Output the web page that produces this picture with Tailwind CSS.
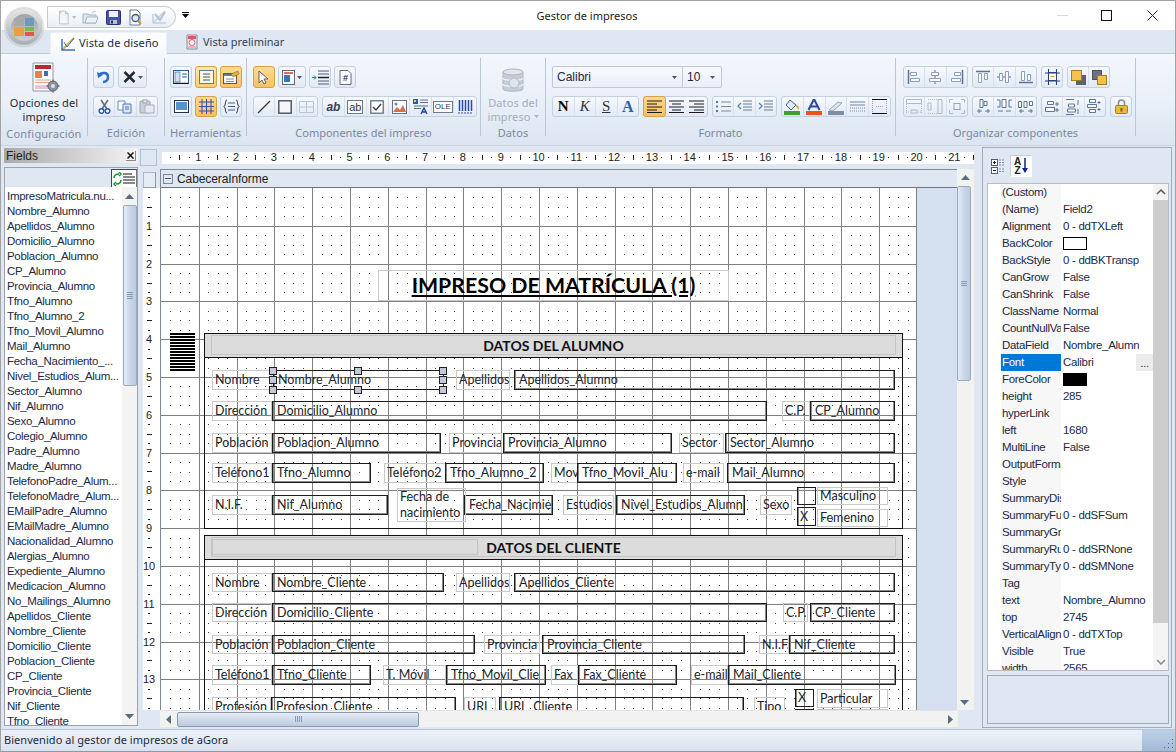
<!DOCTYPE html>
<html lang="es">
<head>
<meta charset="UTF-8">
<title>Gestor de impresos</title>
<script src="https://cdn.jsdelivr.net/npm/@tailwindcss/browser@4"></script>
</head>
<body class="bg-[#dfe7f2] overflow-hidden">
<div class="relative w-[1176px] h-[752px] flex flex-col border border-[#a3a3a3] border-b-[#8f98a5] bg-[#dfe7f2] overflow-hidden font-['Noto_Sans',sans-serif] text-[11px] text-[#1e2430]">

  <!-- barra de titulo -->
  <div class="relative h-[29px] shrink-0 bg-white flex items-center justify-center">
    <span class="ml-[-2px] mt-[2px] text-[11px] text-[#222]">Gestor de impresos</span>
    <!-- quick access -->
    <div class="absolute left-[46px] top-[5px] w-[129px] h-[22px] rounded-r-full border border-[#c9c9c9] bg-gradient-to-b from-white to-[#e9eef5] flex items-center gap-[6px] pl-[9px]">
      <div class="flex items-center w-[19px]">
        <svg width="16" height="17" viewBox="0 0 16 17"><path d="M3 1h7l3 3v12H3z" fill="#f2f6fa" stroke="#aebccd"/><path d="M10 1v3h3" fill="#dfe7f0" stroke="#aebccd"/><path d="M2 3h3M3.500 1.500v3" stroke="#d9c68a"/></svg>
        <svg width="5" height="3" viewBox="0 0 5 3" class="ml-[1px]"><path d="M0 0h5L2.500 3z" fill="#a9b4c2"/></svg>
      </div>
      <svg width="17" height="16" viewBox="0 0 17 16"><path d="M1 5h5l1 1h7v8H1z" fill="#dce5ef" stroke="#a7b5c6"/><path d="M3 14l2-6h11l-2 6z" fill="#eef3f8" stroke="#a7b5c6"/><path d="M10 4c1-2 3-2 4-1" fill="none" stroke="#b7c5d6"/></svg>
      <svg width="15" height="15" viewBox="0 0 15 15" class="ml-[1px]"><rect x=".5" y=".5" width="14" height="14" rx="1" fill="#4453a8" stroke="#2a3272"/><rect x="3" y="1" width="9" height="6" fill="#eef0fa"/><rect x="4" y="10" width="7" height="4" fill="#b9bfdc"/><rect x="5" y="10.500" width="2" height="3" fill="#2a3272"/></svg>
      <svg width="17" height="17" viewBox="0 0 17 17"><path d="M3 1h7l3 3v12H3z" fill="#fff" stroke="#6e7f95"/><circle cx="8.500" cy="9" r="3.500" fill="#dbe9f7" stroke="#4a5a70" stroke-width="1.300"/><path d="M11 12l3 3" stroke="#c99a2e" stroke-width="2"/></svg>
      <svg width="17" height="16" viewBox="0 0 17 16" class="ml-[1px]"><path d="M2 14L14 2M2 14h13M2 14V5" stroke="#c3cfdd" stroke-width="1.500" fill="none"/><path d="M4 5l5 6 5-8" fill="none" stroke="#b5c3d3" stroke-width="2"/></svg>
    </div>
    <div class="absolute left-[181px] top-[11px] flex flex-col items-center gap-[1px]">
      <div class="w-[7px] h-[1px] bg-black"></div>
      <svg width="7" height="4" viewBox="0 0 7 4"><path d="M0 0h7L3.500 4z" fill="#000"/></svg>
    </div>
    <!-- botones ventana -->
    <div class="absolute left-[1056px] top-[14px] w-[11px] h-[1px] bg-[#d8d8d8]"></div>
    <div class="absolute left-[1100px] top-[9px] w-[11px] h-[11px] border border-[#111]"></div>
    <svg class="absolute left-[1146px] top-[9px]" width="11" height="11" viewBox="0 0 11 11"><path d="M.5.5l10 10M10.500.5l-10 10" stroke="#222"/></svg>
  </div>

  <!-- orbe -->
  <div class="absolute left-[4px] top-[7px] w-[38px] h-[38px] rounded-full bg-gradient-to-b from-[#e6e6e6] to-[#a9afb6] border border-[#dcdcdc] shadow-[0_0_2px_#7f8a96] flex items-center justify-center z-10">
    <div class="w-[27px] h-[27px] rounded-full bg-gradient-to-b from-[#9fa5ac] to-[#c9ced4] flex items-center justify-center">
      <div class="grid grid-cols-2 gap-[1px] w-[20px] h-[18px]">
        <div class="bg-[#a9a9a9]"></div>
        <div class="bg-[#6f9ab6]"></div>
        <div class="bg-[#ef9f3a]"></div>
        <div class="flex flex-col gap-[1px]"><div class="flex-1 bg-[#80b455]"></div><div class="flex-1 bg-[#e2554a]"></div></div>
      </div>
    </div>
  </div>

  <!-- pestañas -->
  <div class="h-[23px] shrink-0 flex pl-[49px] items-end">
    <div class="w-[117px] h-[22px] bg-gradient-to-b from-white to-[#f5f8fc] rounded-t-[2px] border-x border-t border-[#eaf0f7] flex items-center pl-[10px] gap-[3px] text-[#1d2c42] relative z-[1] mb-[-1px]">
      <svg width="15" height="15" viewBox="0 0 15 15"><path d="M1 14L13 2" stroke="#e0b04a" stroke-width="2"/><path d="M1 3v11h13" fill="none" stroke="#3a73b8" stroke-width="1.500"/><path d="M3 6l3 5 7-9" fill="none" stroke="#3a73b8"/></svg>
      <span class="tracking-[.1px] whitespace-nowrap">Vista de diseño</span>
    </div>
    <div class="ml-[18px] h-[22px] flex items-center gap-[3px] text-[#2f3f57]">
      <svg width="15" height="16" viewBox="0 0 15 16"><path d="M2 1h10v14H2z" fill="#f7e5ea" stroke="#8b8f98"/><rect x="3" y="2" width="8" height="3" fill="#d8586a"/><circle cx="7" cy="8.500" r="3" fill="#fff" stroke="#c9606f"/><rect x="3" y="12" width="8" height="2" fill="#e9b6c0"/></svg>
      <span class="whitespace-nowrap">Vista preliminar</span>
    </div>
  </div>

  <!-- ribbon -->
  <div class="h-[92px] shrink-0 border-t border-[#bccadb] bg-gradient-to-b from-[#f3f7fc] via-[#eaf0f8] to-[#dbe5f1] flex pt-[4px] text-[#1e2a3c]">

    <!-- Configuracion -->
    <div class="w-[87px] h-[78px] shrink-0 border-r border-[#bac6d6] flex flex-col items-center">
      <svg class="mt-[4px] ml-[3px] shrink-0" width="28" height="32" viewBox="0 0 28 32">
        <path d="M1 1h20v28H1z" fill="#fff" stroke="#8b95a3"/>
        <rect x="3" y="3" width="16" height="4" fill="#b8292f"/>
        <rect x="3" y="9" width="7" height="7" fill="#e9804a"/>
        <rect x="12" y="9" width="4" height="5" fill="#3a6fb0"/>
        <path d="M3 18h16M3 20.500h16" stroke="#f0a080"/>
        <rect x="3" y="23" width="16" height="4" fill="#f0c0d8"/>
        <circle cx="21" cy="24" r="5" fill="#8c939c" stroke="#5e656e"/><circle cx="21" cy="24" r="2" fill="#dfe3e8"/>
        <path d="M21 17.500v2M21 28.500v2M14.500 24h2M25.500 24h2" stroke="#6a717a" stroke-width="1.500"/>
      </svg>
      <div class="mt-[2px] leading-[13.500px] text-center tracking-[.1px] whitespace-nowrap">Opciones del<br>impreso</div>
      <div class="mt-[2px] h-[11px] leading-[18px] text-[#7b8aa0] tracking-[.2px] whitespace-nowrap">Configuración</div>
    </div>

    <!-- Edicion -->
    <div class="w-[77px] h-[78px] shrink-0 border-r border-[#bac6d6] pl-[5px] pt-[8px] flex flex-col">
      <div class="flex gap-[4px] h-[22px]">
        <div class="w-[21px] flex items-center justify-center border border-[#c3d0e0] rounded-[3px] bg-gradient-to-b from-[#f6f9fd] to-[#e2eaf5]">
          <svg width="15" height="14" viewBox="0 0 15 14"><path d="M3 5c3-3 9-3 9 2 0 3-2 5-5 5" fill="none" stroke="#2f6cc4" stroke-width="2.500"/><path d="M1 2l1 6 5-3z" fill="#2f6cc4"/></svg>
        </div>
        <div class="w-[29px] flex items-center justify-center gap-[2px] border border-[#c3d0e0] rounded-[3px] bg-gradient-to-b from-[#f6f9fd] to-[#e2eaf5]">
          <svg width="13" height="12" viewBox="0 0 13 12"><path d="M1.500 1l10 10M11.500 1l-10 10" stroke="#262a30" stroke-width="2.500"/></svg>
          <svg width="5" height="3" viewBox="0 0 5 3"><path d="M0 0h5L2.500 3z" fill="#4a5566"/></svg>
        </div>
      </div>
      <div class="flex mt-[8px] h-[21px] w-[65px] border border-[#c3d0e0] rounded-[3px] bg-gradient-to-b from-[#f6f9fd] to-[#e2eaf5] divide-x divide-[#d7e0ec]">
        <div class="flex-1 flex items-center justify-center"><svg width="13" height="15" viewBox="0 0 13 15"><path d="M3 1l6 9M10 1L4 10" stroke="#5a6a80" stroke-width="1.500"/><circle cx="3.500" cy="12" r="2.300" fill="#fff" stroke="#2c56a8" stroke-width="1.500"/><circle cx="9.500" cy="12" r="2.300" fill="#fff" stroke="#2c56a8" stroke-width="1.500"/></svg></div>
        <div class="flex-1 flex items-center justify-center"><svg width="16" height="14" viewBox="0 0 16 14"><path d="M1 1h7v9H1z" fill="#fff" stroke="#6d8ab3"/><path d="M6 4h8v9H6z" fill="#dbe8f8" stroke="#4d79b5"/><path d="M8 7h4M8 9h4" stroke="#4d79b5"/></svg></div>
        <div class="flex-1 flex items-center justify-center"><svg width="16" height="15" viewBox="0 0 16 15"><rect x="1" y="2" width="10" height="12" rx="1" fill="#c9d0d9" stroke="#9aa5b2"/><rect x="4" y="1" width="4" height="3" fill="#e5e9ee" stroke="#9aa5b2"/><path d="M6 6h9v8H6z" fill="#e6ebf1" stroke="#a5afbc"/></svg></div>
      </div>
      <div class="mt-[8px] h-[11px] leading-[16px] text-center text-[#7b8aa0] tracking-[.2px] mr-[5px]">Edición</div>
    </div>

    <!-- Herramientas -->
    <div class="w-[82px] h-[78px] shrink-0 border-r border-[#bac6d6] pl-[5px] pt-[8px] flex flex-col">
      <div class="flex gap-[3px] h-[22px]">
        <div class="w-[22px] flex items-center justify-center border border-[#c3d0e0] rounded-[3px] bg-gradient-to-b from-[#f6f9fd] to-[#e2eaf5]"><svg width="16" height="14" viewBox="0 0 16 14"><rect x=".5" y=".5" width="15" height="13" fill="#fff" stroke="#2e5c9a"/><rect x="2" y="2" width="5" height="10" fill="#cfe0f3" stroke="#2e5c9a" stroke-width=".6"/><path d="M9 4h5M9 7h5" stroke="#2e5c9a"/><path d="M.5 13.500h15" stroke="#121a2a" stroke-width="1.500"/></svg></div>
        <div class="w-[22px] flex items-center justify-center border border-[#d3a348] rounded-[3px] bg-gradient-to-b from-[#fde7ae] to-[#fbcf74]"><svg width="15" height="14" viewBox="0 0 15 14"><rect x=".5" y=".5" width="14" height="13" fill="#fff7dd" stroke="#5b7aa6"/><path d="M4 4h7M4 7h7M4 10h7" stroke="#2e5c9a"/></svg></div>
        <div class="w-[22px] flex items-center justify-center border border-[#d3a348] rounded-[3px] bg-gradient-to-b from-[#fcdc94] to-[#f9c362]"><svg width="17" height="14" viewBox="0 0 17 14"><rect x=".5" y="3.500" width="13" height="10" fill="#fff" stroke="#4b5666"/><rect x="1" y="4" width="12" height="2" fill="#64789a"/><path d="M3 9h8M3 11.500h8" stroke="#7d8896"/><path d="M8 4l7-3 1 3-6 3z" fill="#d9b43e" stroke="#8a7326" stroke-width=".6"/></svg></div>
      </div>
      <div class="flex gap-[3px] mt-[8px] h-[21px]">
        <div class="w-[22px] flex items-center justify-center border border-[#c3d0e0] rounded-[3px] bg-gradient-to-b from-[#f6f9fd] to-[#e2eaf5]"><svg width="15" height="13" viewBox="0 0 15 13"><rect x=".5" y=".5" width="14" height="12" fill="#fff" stroke="#23324a"/><rect x="2" y="2" width="11" height="8" fill="#5d8fd0"/></svg></div>
        <div class="w-[22px] flex items-center justify-center border border-[#d3a348] rounded-[3px] bg-gradient-to-b from-[#fcd98c] to-[#f9c05c]"><svg width="15" height="15" viewBox="0 0 15 15"><path d="M3 0v15M7.500 0v15M12 0v15M0 3h15M0 7.500h15M0 12h15" stroke="#3a4fa8" stroke-width="1"/></svg></div>
        <div class="w-[22px] flex items-center justify-center border border-[#c3d0e0] rounded-[3px] bg-gradient-to-b from-[#f6f9fd] to-[#e2eaf5]"><svg width="17" height="15" viewBox="0 0 17 15"><path d="M4 1C2 1 3 6 1 7.500 3 9 2 14 4 14M13 1c2 0 1 5 3 6.500C14 9 15 14 13 14" fill="none" stroke="#1a2230"/><path d="M5 4h7M5 7.500h7M5 11h7" stroke="#3e5f8e"/></svg></div>
      </div>
      <div class="mt-[8px] ml-[-5px] h-[11px] leading-[16px] text-center text-[#7b8aa0]">Herramientas</div>
    </div>

    <!-- Componentes -->
    <div class="w-[234px] h-[78px] shrink-0 border-r border-[#bac6d6] pl-[6px] pt-[8px] flex flex-col">
      <div class="flex gap-[3px] h-[22px]">
        <div class="w-[22px] flex items-center justify-center border border-[#d3a348] rounded-[3px] bg-gradient-to-b from-[#fcdc94] to-[#f9c362]"><svg width="12" height="15" viewBox="0 0 12 15"><path d="M1 1v12l3-3 2 4 2-1-2-4h4z" fill="#fff" stroke="#5a6573"/></svg></div>
        <div class="w-[28px] flex items-center justify-center gap-[2px] border border-[#c3d0e0] rounded-[3px] bg-gradient-to-b from-[#f6f9fd] to-[#e2eaf5]"><svg width="13" height="15" viewBox="0 0 13 15"><rect x=".5" y=".5" width="12" height="14" fill="#fff" stroke="#5d6b7e"/><rect x="2" y="2" width="9" height="2" fill="#d8705a"/><rect x="2" y="5" width="6" height="7" fill="#3a75b8"/></svg><svg width="5" height="3" viewBox="0 0 5 3"><path d="M0 0h5L2.500 3z" fill="#4a5566"/></svg></div>
        <div class="w-[22px] flex items-center justify-center border border-[#c3d0e0] rounded-[3px] bg-gradient-to-b from-[#f6f9fd] to-[#e2eaf5]"><svg width="17" height="15" viewBox="0 0 17 15"><path d="M6 1h11M6 4h11M6 11h11M6 14h11" stroke="#4a5e7c"/><path d="M6 7.500h11" stroke="#1a2230" stroke-width="1.500"/><path d="M0 7.500h4M2 5.500l2 2-2 2" fill="none" stroke="#2e6fc0"/></svg></div>
        <div class="w-[22px] flex items-center justify-center border border-[#c3d0e0] rounded-[3px] bg-gradient-to-b from-[#f6f9fd] to-[#e2eaf5]"><svg width="13" height="15" viewBox="0 0 13 15"><path d="M1 .5h8l3 3v11H1z" fill="#fff" stroke="#5d6b7e"/><text x="6.500" y="11" text-anchor="middle" font-size="9" font-weight="700" font-family="Liberation Sans" fill="#1a2a6a">#</text></svg></div>
      </div>
      <div class="flex gap-[4px] mt-[8px] h-[21px]">
        <div class="flex w-[65px] border border-[#c3d0e0] rounded-[3px] bg-gradient-to-b from-[#f6f9fd] to-[#e2eaf5] divide-x divide-[#d7e0ec]">
          <div class="flex-1 flex items-center justify-center"><svg width="14" height="14" viewBox="0 0 14 14"><path d="M1 13L13 1" stroke="#30353d" stroke-width="1.200"/></svg></div>
          <div class="flex-1 flex items-center justify-center"><svg width="14" height="14" viewBox="0 0 14 14"><rect x=".8" y=".8" width="12.400" height="12.400" fill="#f4f6f9" stroke="#4a4f57" stroke-width="1.400"/></svg></div>
          <div class="flex-1 flex items-center justify-center"><svg width="15" height="12" viewBox="0 0 15 12"><path d="M.5.5h14v11H.5zM.5 6h14M7.500.5v11" fill="none" stroke="#b9c4d2"/></svg></div>
        </div>
        <div class="flex w-[155px] border border-[#c3d0e0] rounded-[3px] bg-gradient-to-b from-[#f6f9fd] to-[#e2eaf5] divide-x divide-[#d7e0ec]">
          <div class="w-[22px] flex items-center justify-center font-['Liberation_Sans',sans-serif] font-bold italic text-[#3a4048] text-[12px]">ab</div>
          <div class="w-[22px] flex items-center justify-center"><span class="border border-[#6e7a8a] bg-white px-[1px] font-['Liberation_Sans',sans-serif] text-[#30363e] text-[11px] leading-[12px]">ab</span></div>
          <div class="w-[22px] flex items-center justify-center"><svg width="14" height="14" viewBox="0 0 14 14"><rect x=".8" y=".8" width="12.400" height="12.400" fill="#fff" stroke="#5b6472" stroke-width="1.200"/><path d="M3 7l3 3 5-6" fill="none" stroke="#3b4452" stroke-width="1.500"/></svg></div>
          <div class="w-[22px] flex items-center justify-center"><svg width="15" height="14" viewBox="0 0 15 14"><rect x=".5" y=".5" width="14" height="13" fill="#fff" stroke="#687486"/><path d="M1 12l4-5 3 3 3-5 3 7z" fill="#d3704a"/><circle cx="4" cy="4" r="1.500" fill="#4e8ccc"/></svg></div>
          <div class="w-[22px] flex items-center justify-center"><svg width="16" height="16" viewBox="0 0 16 16"><rect x="0" y="0" width="5" height="5" fill="#2c56b8"/><rect x="1" y="1" width="2" height="2" fill="#f0d040"/><path d="M7 1h8M7 3.500h8M1 7h14M1 9.500h7" stroke="#5d6f8a"/><path d="M8 15l3-6 3 6M9 13h4" fill="none" stroke="#1f3e9a" stroke-width="1.300"/></svg></div>
          <div class="w-[22px] flex items-center justify-center"><span class="border border-[#6e7a8a] bg-white px-[1px] font-['Liberation_Sans',sans-serif] text-[#2c3a52] text-[8px] leading-[10px]">OLE</span></div>
          <div class="w-[22px] flex items-center justify-center"><svg width="15" height="14" viewBox="0 0 15 14"><path d="M1.500 0v11M4.500 0v11M7.500 0v11M10.500 0v11M13.500 0v11" stroke="#2c4aa8" stroke-width="1.500"/><path d="M0 13h15" stroke="#2c4aa8" stroke-dasharray="2 1"/></svg></div>
        </div>
      </div>
      <div class="mt-[8px] ml-[-6px] h-[11px] leading-[16px] text-center text-[#7b8aa0] whitespace-nowrap">Componentes del impreso</div>
    </div>

    <!-- Datos -->
    <div class="w-[65px] h-[78px] shrink-0 border-r border-[#bac6d6] flex flex-col items-center">
      <svg class="mt-[10px] shrink-0" width="24" height="26" viewBox="0 0 24 26"><path d="M2 4v17c0 3 20 3 20 0V4" fill="#c3ccd7" stroke="#aeb8c4"/><ellipse cx="12" cy="4" rx="10" ry="3" fill="#dfe5ec" stroke="#aeb8c4"/><path d="M2 10c0 3 20 3 20 0M2 16c0 3 20 3 20 0" fill="none" stroke="#eef2f6" stroke-width="1.500"/><circle cx="13" cy="15" r="5" fill="#dfe5ec" stroke="#b0bac6"/></svg>
      <div class="mt-[2px] leading-[13.500px] text-center text-[#a3adb9] tracking-[.1px] whitespace-nowrap">Datos del<br><span class="inline-flex items-center gap-[3px]">impreso<svg width="5" height="3" viewBox="0 0 5 3"><path d="M0 0h5L2.500 3z" fill="#a9b4c2"/></svg></span></div>
      <div class="mt-[2px] h-[11px] leading-[16px] text-[#7b8aa0] tracking-[.1px]">Datos</div>
    </div>

    <!-- Formato -->
    <div class="w-[350px] h-[78px] shrink-0 border-r border-[#bac6d6] pl-[6px] pt-[8px] flex flex-col">
      <div class="flex h-[22px] w-[170px] border border-[#bccadb] rounded-[2px] bg-gradient-to-b from-[#f8fafd] to-[#e9eff7] font-['Liberation_Sans',sans-serif]">
        <div class="w-[130px] border-r border-[#bccadb] flex items-center justify-between px-[4px] pr-[5px] text-[12px]">Calibri<svg width="5" height="3" viewBox="0 0 5 3"><path d="M0 0h5L2.500 3z" fill="#4a5566"/></svg></div>
        <div class="flex-1 flex items-center justify-between pl-[4px] pr-[6px] text-[12px]">10<svg width="5" height="3" viewBox="0 0 5 3"><path d="M0 0h5L2.500 3z" fill="#4a5566"/></svg></div>
      </div>
      <div class="flex gap-[4px] mt-[8px] h-[21px]">
        <div class="flex w-[87px] border border-[#c3d0e0] rounded-[3px] bg-gradient-to-b from-[#f6f9fd] to-[#e2eaf5] divide-x divide-[#d7e0ec] font-['Liberation_Serif',serif] text-[15px]">
          <div class="flex-1 flex items-center justify-center font-bold text-black">N</div>
          <div class="flex-1 flex items-center justify-center italic text-[#333]">K</div>
          <div class="flex-1 flex items-center justify-center underline text-[#333]">S</div>
          <div class="flex-1 flex items-center justify-center font-bold text-[#2d5fa6] text-[16px]">A</div>
        </div>
        <div class="flex w-[65px] border border-[#c3d0e0] rounded-[3px] bg-gradient-to-b from-[#f6f9fd] to-[#e2eaf5]">
          <div class="flex-1 flex items-center justify-center border border-[#d3a348] rounded-[3px] bg-gradient-to-b from-[#fcd98c] to-[#f9c05c] m-[-1px]"><svg width="15" height="13" viewBox="0 0 15 13"><path d="M0 1h15M0 4h10M0 7h15M0 10h10M0 12.500h15" stroke="#1a1a1a"/></svg></div>
          <div class="flex-1 flex items-center justify-center ml-[1px]"><svg width="15" height="13" viewBox="0 0 15 13"><path d="M0 1h15M3 4h9M0 7h15M3 10h9M0 12.500h15" stroke="#1a1a1a"/></svg></div>
          <div class="flex-1 flex items-center justify-center"><svg width="15" height="13" viewBox="0 0 15 13"><path d="M0 1h15M5 4h10M0 7h15M5 10h10M0 12.500h15" stroke="#1a1a1a"/></svg></div>
        </div>
        <div class="flex w-[65px] border border-[#c3d0e0] rounded-[3px] bg-gradient-to-b from-[#f6f9fd] to-[#e2eaf5] divide-x divide-[#d7e0ec]">
          <div class="flex-1 flex items-center justify-center"><svg width="15" height="13" viewBox="0 0 15 13"><path d="M5 2h10M5 6.500h10M5 11h10" stroke="#7a8ba3"/><rect x="0" y="1" width="2" height="2" fill="#5d7698"/><rect x="0" y="5.500" width="2" height="2" fill="#5d7698"/><rect x="0" y="10" width="2" height="2" fill="#5d7698"/></svg></div>
          <div class="flex-1 flex items-center justify-center"><svg width="15" height="13" viewBox="0 0 15 13"><path d="M6 1h9M6 4h9M6 7h9M6 10h9" stroke="#6b7d96"/><path d="M4 3L1 6l3 3" fill="none" stroke="#5a87c4" stroke-width="1.300"/></svg></div>
          <div class="flex-1 flex items-center justify-center"><svg width="15" height="13" viewBox="0 0 15 13"><path d="M6 1h9M6 4h9M6 7h9M6 10h9" stroke="#6b7d96"/><path d="M1 3l3 3-3 3" fill="none" stroke="#5a87c4" stroke-width="1.300"/></svg></div>
        </div>
        <div class="flex w-[110px] border border-[#c3d0e0] rounded-[3px] bg-gradient-to-b from-[#f6f9fd] to-[#e2eaf5] divide-x divide-[#d7e0ec]">
          <div class="flex-1 flex items-center justify-center"><svg width="16" height="16" viewBox="0 0 16 16"><path d="M6 1l6 5-5 5-5-5z" fill="#dfe8f3" stroke="#4c6080"/><path d="M12 6c2 2 3 3 2 4" fill="none" stroke="#d59c2a" stroke-width="1.500"/><rect x="0" y="12" width="16" height="4" fill="#3f9e3a"/></svg></div>
          <div class="flex-1 flex items-center justify-center"><svg width="16" height="16" viewBox="0 0 16 16"><path d="M2.500 11L8 0l5.500 11M4.500 7.500h7" fill="none" stroke="#2c4a96" stroke-width="2"/><rect x="0" y="12" width="16" height="4" fill="#ee4f22"/></svg></div>
          <div class="flex-1 flex items-center justify-center"><svg width="16" height="16" viewBox="0 0 16 16"><path d="M1 11l9-8 4 1-9 8z" fill="#dde4ee" stroke="#9aa7b8"/><rect x="0" y="12" width="16" height="4" fill="#7f8ea6"/></svg></div>
          <div class="flex-1 flex items-center justify-center"><svg width="15" height="12" viewBox="0 0 15 12"><path d="M0 1h15M0 4h15" stroke="#7588a3"/><path d="M0 7h15M0 10h15" stroke="#7588a3" stroke-dasharray="1 1"/></svg></div>
          <div class="flex-1 flex items-center justify-center"><svg width="15" height="15" viewBox="0 0 15 15"><path d="M0 .5h15M0 14.500h15" stroke="#111"/><path d="M.5 2v11M14.500 2v11M4 7.500h8" stroke="#9aa7b8" stroke-dasharray="1 1"/></svg></div>
        </div>
      </div>
      <div class="mt-[8px] ml-[-6px] h-[11px] leading-[16px] text-center text-[#7b8aa0]">Formato</div>
    </div>

    <!-- Organizar -->
    <div class="w-[240px] h-[78px] shrink-0 border-r border-[#bac6d6] pl-[7px] pt-[8px] flex flex-col">
      <div class="flex gap-[4px] h-[22px]">
        <div class="flex w-[65px] border border-[#c3d0e0] rounded-[3px] bg-gradient-to-b from-[#f6f9fd] to-[#e2eaf5] divide-x divide-[#d7e0ec]">
          <div class="flex-1 flex items-center justify-center"><svg width="14" height="14" viewBox="0 0 14 14"><path d="M1.500 0v14" stroke="#5c7396" stroke-width="1.500"/><path d="M3.500 2.500h6v3h-6zM3.500 8.500h9v3h-9z" fill="#fff" stroke="#8ea0b8"/></svg></div>
          <div class="flex-1 flex items-center justify-center"><svg width="14" height="14" viewBox="0 0 14 14"><path d="M7 0v14" stroke="#5c7396"/><path d="M3.500 2.500h7v3h-7zM1.500 8.500h11v3h-11z" fill="#fff" stroke="#8ea0b8"/></svg></div>
          <div class="flex-1 flex items-center justify-center"><svg width="14" height="14" viewBox="0 0 14 14"><path d="M12.500 0v14" stroke="#5c7396" stroke-width="1.500"/><path d="M4.500 2.500h6v3h-6zM1.500 8.500h9v3h-9z" fill="#fff" stroke="#8ea0b8"/></svg></div>
        </div>
        <div class="flex w-[65px] border border-[#c3d0e0] rounded-[3px] bg-gradient-to-b from-[#f6f9fd] to-[#e2eaf5] divide-x divide-[#d7e0ec]">
          <div class="flex-1 flex items-center justify-center"><svg width="14" height="14" viewBox="0 0 14 14"><path d="M0 1.500h14" stroke="#5c7396" stroke-width="1.500"/><path d="M2.500 3.500h3v9h-3zM8.500 3.500h3v6h-3z" fill="#fff" stroke="#8ea0b8"/></svg></div>
          <div class="flex-1 flex items-center justify-center"><svg width="14" height="14" viewBox="0 0 14 14"><path d="M0 7h14" stroke="#5c7396"/><path d="M2.500 3.500h3v7h-3zM8.500 1.500h3v11h-3z" fill="#fff" stroke="#8ea0b8"/></svg></div>
          <div class="flex-1 flex items-center justify-center"><svg width="14" height="14" viewBox="0 0 14 14"><path d="M0 12.500h14" stroke="#5c7396" stroke-width="1.500"/><path d="M2.500 1.500h3v9h-3zM8.500 4.500h3v6h-3z" fill="#fff" stroke="#8ea0b8"/></svg></div>
        </div>
        <div class="w-[22px] flex items-center justify-center border border-[#c3d0e0] rounded-[3px] bg-gradient-to-b from-[#f6f9fd] to-[#e2eaf5]"><svg width="15" height="16" viewBox="0 0 15 16"><rect x="3.500" y="3.500" width="8" height="8" fill="#fff" stroke="#26407c"/><path d="M3.500 0v16M11.500 0v16M0 4h15M0 12h15" stroke="#26407c"/><path d="M5.500 7.500h4" stroke="#c9a032"/></svg></div>
        <div class="flex w-[43px] border border-[#c3d0e0] rounded-[3px] bg-gradient-to-b from-[#f6f9fd] to-[#e2eaf5] divide-x divide-[#d7e0ec]">
          <div class="flex-1 flex items-center justify-center"><svg width="15" height="15" viewBox="0 0 15 15"><rect x="5" y="5" width="10" height="10" fill="#5d646e"/><rect x=".5" y=".5" width="10" height="10" fill="#f2c24e" stroke="#a57c22"/></svg></div>
          <div class="flex-1 flex items-center justify-center"><svg width="15" height="15" viewBox="0 0 15 15"><rect x=".5" y=".5" width="9" height="9" fill="#6b727c" stroke="#4e545d"/><rect x="5.500" y="5.500" width="9" height="9" fill="#f2c24e" stroke="#a57c22"/></svg></div>
        </div>
      </div>
      <div class="flex gap-[4px] mt-[8px] h-[21px]">
        <div class="flex w-[65px] border border-[#c3d0e0] rounded-[3px] bg-gradient-to-b from-[#f6f9fd] to-[#e2eaf5] divide-x divide-[#d7e0ec]">
          <div class="flex-1 flex items-center justify-center"><svg width="16" height="15" viewBox="0 0 16 15"><path d="M.5.5h15v4H.5zM5 11h6v3H5z" fill="none" stroke="#adbaca"/><path d="M.5 5v9M15.500 5v9M0 13h4M12 13h4" stroke="#adbaca" stroke-dasharray="1 1"/></svg></div>
          <div class="flex-1 flex items-center justify-center"><svg width="16" height="15" viewBox="0 0 16 15"><path d="M11 .5h4v14h-4zM1 4h3v7H1z" fill="none" stroke="#adbaca"/><path d="M1 .5h9M1 14.500h9" stroke="#adbaca" stroke-dasharray="1 1"/></svg></div>
          <div class="flex-1 flex items-center justify-center"><svg width="16" height="15" viewBox="0 0 16 15"><path d="M.5 4V.5H4M12 .5h3.500V4M.5 11v3.500H4M12 14.500h3.500V11" fill="none" stroke="#adbaca"/><rect x="5" y="4.500" width="6" height="6" fill="none" stroke="#94a4b8"/></svg></div>
        </div>
        <div class="flex w-[65px] border border-[#c3d0e0] rounded-[3px] bg-gradient-to-b from-[#f6f9fd] to-[#e2eaf5] divide-x divide-[#d7e0ec]">
          <div class="flex-1 flex items-center justify-center"><svg width="15" height="15" viewBox="0 0 15 15"><path d="M4 .5h3v8H4zM8 2.500h3v4H8z" fill="#fff" stroke="#5d7698"/><path d="M1 12h5M9 12h5M3 10v4M12 10v4" stroke="#5d7698"/></svg></div>
          <div class="flex-1 flex items-center justify-center"><svg width="17" height="15" viewBox="0 0 17 15"><path d="M6 .5h4v8H6z" fill="#fff" stroke="#5d7698"/><path d="M1 1h3M13 1h3M1 8h3M13 8h3M4 1v7M13 1v7M2 12h5M10 12h5" fill="none" stroke="#5d7698"/></svg></div>
          <div class="flex-1 flex items-center justify-center"><svg width="16" height="15" viewBox="0 0 16 15"><path d="M.5 2.500h3v6h-3zM6 2.500h3v6H6zM11.500 2.500h3v4h-3z" fill="#fff" stroke="#5d7698"/><path d="M1 12h5M10 12h5M3 10v4M13 10v4" stroke="#5d7698"/></svg></div>
        </div>
        <div class="flex w-[65px] border border-[#c3d0e0] rounded-[3px] bg-gradient-to-b from-[#f6f9fd] to-[#e2eaf5] divide-x divide-[#d7e0ec]">
          <div class="flex-1 flex items-center justify-center"><svg width="15" height="15" viewBox="0 0 15 15"><path d="M2.500 2.500h6v3h-6zM.5 8.500h9v4h-9z" fill="#fff" stroke="#5d7698"/><path d="M12 3v4M10 5h4M12 9v4M10 11h4" stroke="#5d7698"/></svg></div>
          <div class="flex-1 flex items-center justify-center"><svg width="15" height="16" viewBox="0 0 15 16"><path d="M2.500 5h6v3h-6zM1.500 10h8v3h-8z" fill="#fff" stroke="#5d7698"/><path d="M0 .5h8M0 15.500h8M12 1v5M12 10v5" stroke="#5d7698"/></svg></div>
          <div class="flex-1 flex items-center justify-center"><svg width="15" height="15" viewBox="0 0 15 15"><path d="M2.500 .5h6v3h-6zM.5 5.500h9v3h-9zM2.500 10.500h6v3h-6z" fill="#fff" stroke="#5d7698"/><path d="M12 2v3M10.500 3.500h3M12 9v3M10.500 10.500h3" stroke="#5d7698"/></svg></div>
        </div>
        <div class="w-[22px] flex items-center justify-center border border-[#c3d0e0] rounded-[3px] bg-gradient-to-b from-[#f6f9fd] to-[#e2eaf5]"><svg width="13" height="15" viewBox="0 0 13 15"><path d="M3.500 7V4a3 3 0 0 1 6 0v3" fill="none" stroke="#8a8f96" stroke-width="1.500"/><rect x=".5" y="6.500" width="12" height="8" rx="1" fill="#e9b93a" stroke="#a3801e"/><rect x="5.500" y="9" width="2" height="3.500" fill="#7a5c10"/></svg></div>
      </div>
      <div class="mt-[8px] ml-[-7px] h-[11px] leading-[16px] text-center text-[#7b8aa0]">Organizar componentes</div>
    </div>
  </div>

  <!-- cuerpo -->
  <div class="flex-1 min-h-0 flex border-t border-[#c9d4e3]">

    <!-- panel Fields -->
    <aside class="w-[133px] shrink-0 ml-[3px] pt-[2px] flex flex-col">
      <div class="h-[15px] mr-[-1px] flex items-center justify-between bg-gradient-to-r from-[#a9a9a9] to-[#f5f5f5] pl-[2px] pr-[2px] text-[#222] font-['Liberation_Sans',sans-serif] text-[12px]">
        Fields
        <span class="w-[10px] h-[10px] border-b border-r border-[#888] bg-[#f5f5f5] flex items-center justify-center"><svg width="7" height="7" viewBox="0 0 7 7"><path d="M.5.5l6 6M6.500.5l-6 6" stroke="#111" stroke-width="1.500"/></svg></span>
      </div>
      <div class="mt-[4px] h-[559px] mr-[-1px] border border-[#9aa3af] flex flex-col">
        <div class="h-[19px] shrink-0 flex justify-end items-start bg-[#dfe7f2]">
          <div class="w-[26px] h-[19px] border border-[#444] border-r-[#777] bg-white flex items-center justify-center gap-[1px] mt-[1px]">
            <svg width="9" height="14" viewBox="0 0 9 14"><path d="M1 6c0-3 2-4 5-4M6 0l2 2-2 2" fill="none" stroke="#12952a" stroke-width="1.500"/><path d="M8 8c0 3-2 4-5 4M3 10l-2 2 2 2" fill="none" stroke="#12952a" stroke-width="1.500"/></svg>
            <svg width="13" height="13" viewBox="0 0 13 13"><path d="M0 2h9M0 5h12M0 8h12M0 11h12" stroke="#111"/></svg>
          </div>
        </div>
        <div class="relative flex-1 min-h-0 bg-white overflow-hidden">
          <ul id="fieldList" class="pt-[2px] pl-[2px] font-['Liberation_Sans',sans-serif] text-[11.5px] tracking-[-.3px] text-[#1a2a44]"></ul>
          <!-- scrollbar -->
          <div class="absolute right-0 top-0 bottom-0 w-[15px] bg-[#f3f3f1] flex flex-col items-center">
            <svg class="mt-[7px]" width="9" height="5" viewBox="0 0 9 5"><path d="M4.500 0L9 5H0z" fill="#5a6b82"/></svg>
            <div class="mt-[6px] w-[14px] h-[181px] shrink-0 rounded-[2px] border border-[#9aaac0] bg-gradient-to-r from-[#e3ebf6] via-[#cad7e8] to-[#bccbdf] flex flex-col items-center justify-center gap-[1px]">
              <div class="w-[6px] h-[1px] bg-[#8b9ab0]"></div><div class="w-[6px] h-[1px] bg-[#8b9ab0]"></div><div class="w-[6px] h-[1px] bg-[#8b9ab0]"></div><div class="w-[6px] h-[1px] bg-[#8b9ab0]"></div>
            </div>
            <svg class="mt-auto mb-[6px]" width="9" height="5" viewBox="0 0 9 5"><path d="M0 0h9L4.500 5z" fill="#5a6b82"/></svg>
          </div>
        </div>
      </div>
    </aside>

    <!-- zona central -->
    <main class="w-[842px] shrink-0 ml-[1px] flex flex-col">
      <div class="flex h-[23px] shrink-0 pt-[3px]">
        <div class="ml-[2px] w-[17px] h-[17px] border border-[#b4c1d2] bg-[#dfe7f2]"></div>
        <div id="rulerH" class="relative ml-[5px] mt-[3px] w-[812px] h-[12px] bg-white overflow-hidden font-['Liberation_Sans',sans-serif] text-[11px] text-[#222]"></div>
      </div>
      <div class="flex flex-1 min-h-0">
        <!-- regla vertical -->
        <div class="w-[17px] ml-[5px] shrink-0 flex flex-col pt-[3px]">
          <div class="w-[13px] h-[16px] shrink-0 border border-[#aab6c7] bg-[#e6ecf5] border-b-[#8d99aa] border-r-[#8d99aa]"></div>
          <div id="rulerV" class="relative flex-1 mb-[17px] bg-white overflow-hidden font-['Liberation_Sans',sans-serif] text-[11px] text-[#222]"></div>
        </div>
        <div class="w-[815px] shrink-0 flex flex-col">
          <div class="flex-1 min-h-0 flex">
            <!-- diseñador -->
            <div class="w-[797px] shrink-0 flex flex-col border-l border-t border-[#7f8894]">
              <div class="h-[18px] shrink-0 flex items-center border-b border-[#6d7580] pl-[2px] gap-[4px] font-['Liberation_Sans',sans-serif] text-[12px] tracking-[-.1px] text-[#222]">
                <span class="w-[10px] h-[10px] border border-[#7a8796] flex items-center justify-center"><span class="w-[6px] h-[1px] bg-[#4a5566]"></span></span>
                CabeceraInforme
              </div>
              <div id="canvas" class="relative flex-1 min-h-0 bg-[#d4dfef] overflow-hidden font-['Lato',sans-serif] text-[12.5px] text-[#20242c]">
                <div class="absolute left-0 top-0 w-[756px] h-[560px] bg-white border-r border-[#808080]">
                  <svg id="grid" class="absolute left-0 top-0" width="756" height="560" shape-rendering="crispEdges"></svg>
                </div>
              </div>
            </div>
            <!-- scrollbar vertical -->
            <div class="w-[17px] shrink-0 bg-[#f2f3f1] flex flex-col items-center pt-[6px]">
              <svg width="9" height="5" viewBox="0 0 9 5"><path d="M4.500 0L9 5H0z" fill="#5a6b82"/></svg>
              <div class="mt-[6px] mr-[3px] w-[14px] h-[195px] shrink-0 rounded-[2px] border border-[#9aaac0] bg-gradient-to-r from-[#e3ebf6] via-[#cad7e8] to-[#bccbdf] flex flex-col items-center justify-center gap-[1px]">
                <div class="w-[6px] h-[1px] bg-[#8b9ab0]"></div><div class="w-[6px] h-[1px] bg-[#8b9ab0]"></div><div class="w-[6px] h-[1px] bg-[#8b9ab0]"></div>
              </div>
              <svg class="mt-auto mb-[5px] mr-[3px]" width="9" height="5" viewBox="0 0 9 5"><path d="M0 0h9L4.500 5z" fill="#5a6b82"/></svg>
            </div>
          </div>
          <!-- scrollbar horizontal -->
          <div class="h-[17px] shrink-0 flex items-center bg-[#f2f3f1] pl-[6px] mr-[17px] border-t border-[#e2e6ea]">
            <svg width="5" height="9" viewBox="0 0 5 9"><path d="M5 0v9L0 4.500z" fill="#5a6b82"/></svg>
            <div class="ml-[6px] w-[242px] h-[15px] rounded-[2px] border border-[#8797ad] bg-gradient-to-b from-[#e6edf7] via-[#cfdbeb] to-[#bccbdf] flex items-center justify-center gap-[1px]">
              <div class="w-[1px] h-[6px] bg-[#8b9ab0]"></div><div class="w-[1px] h-[6px] bg-[#8b9ab0]"></div><div class="w-[1px] h-[6px] bg-[#8b9ab0]"></div><div class="w-[1px] h-[6px] bg-[#8b9ab0]"></div>
            </div>
            <svg class="ml-auto mr-[5px]" width="5" height="9" viewBox="0 0 5 9"><path d="M0 0v9l5-4.500z" fill="#5a6b82"/></svg>
          </div>
        </div>
      </div>
    </main>

    <!-- propiedades -->
    <aside class="w-[190px] shrink-0 ml-[2px] mt-[1px] h-[581px] border border-[#a3abb7] flex flex-col pl-[4px] pr-[2px] font-['Liberation_Sans',sans-serif] text-[11.5px] tracking-[-.3px] text-[#1a2a44]">
      <div class="h-[35px] shrink-0 flex items-start pt-[7px] pl-[4px] gap-[5px]">
        <svg class="mt-[3px]" width="14" height="17" viewBox="0 0 14 17"><rect x=".5" y="1.500" width="6" height="6" fill="#fff" stroke="#55606e"/><path d="M2 4.500h3M3.500 3v3" stroke="#222"/><rect x=".5" y="9.500" width="6" height="6" fill="#fff" stroke="#55606e"/><path d="M2 12.500h3" stroke="#222"/><path d="M8 2h6M8 4.500h6M8 7h6M8 11h6M8 13.500h6" stroke="#8793a3" stroke-dasharray="2 1"/></svg>
        <div class="w-[22px] h-[22px] border border-[#c3d0e0] border-r-white border-b-white bg-white flex items-center justify-center">
          <span class="font-bold text-[10px] leading-[9px] tracking-normal text-[#222] mr-[1px] text-center">A<br>Z</span>
          <svg width="6" height="16" viewBox="0 0 6 16"><path d="M3 0v13" stroke="#13207a" stroke-width="1.500"/><path d="M0 10h6l-3 5z" fill="#13207a"/></svg>
        </div>
      </div>
      <div class="relative h-[488px] shrink-0 border border-[#b5bcc7] bg-white overflow-hidden">
        <div id="props" class="flex flex-col"></div>
        <div class="absolute right-0 top-0 bottom-0 w-[15px] flex flex-col items-center bg-[#f4f4f4]">
          <svg class="my-[5px]" width="10" height="6" viewBox="0 0 10 6"><path d="M1 5l4-4 4 4" fill="none" stroke="#5c5c5c" stroke-width="1.500"/></svg>
          <div class="w-full h-[423px] shrink-0 bg-[#cdcdcd]"></div>
          <svg class="mt-auto mb-[5px]" width="10" height="6" viewBox="0 0 10 6"><path d="M1 1l4 4 4-4" fill="none" stroke="#8a8a8a" stroke-width="1.500"/></svg>
        </div>
      </div>
      <div class="mt-[4px] h-[49px] shrink-0 border border-[#a3abb7] bg-[#dfe7f2]"></div>
    </aside>
  </div>

  <!-- barra de estado -->
  <div class="relative h-[22px] shrink-0 mt-[2px] border-t border-[#b9c5d5] bg-gradient-to-b from-[#edf2f9] to-[#d9e3f0] flex items-center pl-[3px] text-[11px] tracking-[.05px] text-[#1d2838]">
    Bienvenido al gestor de impresos de aGora
    <div class="absolute right-0 top-0 bottom-0 w-[33px] bg-gradient-to-b from-[#bccfe6] to-[#a3bbd9]">
      <svg class="absolute right-[1px] bottom-[2px]" width="11" height="11" viewBox="0 0 11 11"><path d="M9 1h1v1H9zM5 5h1v1H5zM9 5h1v1H9zM1 9h1v1H1zM5 9h1v1H5zM9 9h1v1H9z" fill="#4f6686"/></svg>
    </div>
  </div>
</div>

<script>
  // lista de campos
  const campos = ["ImpresoMatricula.nu...","Nombre_Alumno","Apellidos_Alumno","Domicilio_Alumno","Poblacion_Alumno","CP_Alumno","Provincia_Alumno","Tfno_Alumno","Tfno_Alumno_2","Tfno_Movil_Alumno","Mail_Alumno","Fecha_Nacimiento_...","Nivel_Estudios_Alum...","Sector_Alumno","Nif_Alumno","Sexo_Alumno","Colegio_Alumno","Padre_Alumno","Madre_Alumno","TelefonoPadre_Alum...","TelefonoMadre_Alum...","EMailPadre_Alumno","EMailMadre_Alumno","Nacionalidad_Alumno","Alergias_Alumno","Expediente_Alumno","Medicacion_Alumno","No_Mailings_Alumno","Apellidos_Cliente","Nombre_Cliente","Domicilio_Cliente","Poblacion_Cliente","CP_Cliente","Provincia_Cliente","Nif_Cliente","Tfno_Cliente"];
  document.getElementById("fieldList").innerHTML = campos.map(c => `<li class="h-[15px] leading-[15px] whitespace-nowrap">${c}</li>`).join("");

  // propiedades
  const props = [["(Custom)",""],["(Name)","Field2"],["Alignment","0 - ddTXLeft"],["BackColor","#w"],["BackStyle","0 - ddBKTransparent"],["CanGrow","False"],["CanShrink","False"],["ClassName","Normal"],["CountNullValue","False"],["DataField","Nombre_Alumno"],["Font","Calibri"],["ForeColor","#k"],["height","285"],["hyperLink",""],["left","1680"],["MultiLine","False"],["OutputFormat",""],["Style",""],["SummaryDistinct",""],["SummaryFunc","0 - ddSFSum"],["SummaryGroup",""],["SummaryRunning","0 - ddSRNone"],["SummaryType","0 - ddSMNone"],["Tag",""],["text","Nombre_Alumno"],["top","2745"],["VerticalAlign","0 - ddTXTop"],["Visible","True"],["width","2565"]];
  document.getElementById("props").innerHTML = props.map(([n, v]) => {
    const sel = n === "Font";
    let val = `<span class="block w-[76px] overflow-hidden whitespace-nowrap">${v}</span>`;
    if (v === "#w") val = `<span class="block w-[24px] h-[13px] border border-black bg-white"></span>`;
    if (v === "#k") val = `<span class="block w-[24px] h-[13px] bg-black"></span>`;
    if (n === "text") val = `<span class="block whitespace-nowrap">${v}</span>`;
    return `<div class="flex h-[17px] shrink-0 items-center pl-[13px]">
      <div class="w-[60px] h-[17px] shrink-0 overflow-hidden whitespace-nowrap pl-[1px] leading-[17px] ${sel ? "bg-[#0078d7] text-white" : "bg-[#f7f7f7]"}">${n}</div>
      <div class="relative pl-[2px] flex-1 flex items-center h-[17px]">${val}${sel ? `<span class="absolute left-[75px] top-0 w-[17px] h-[17px] bg-[#ebebeb] text-center leading-[18px] text-[#333]">...</span>` : ""}</div>
    </div>`;
  }).join("");

  // reglas
  const paso = 37.8, rh = document.getElementById("rulerH"), rv = document.getElementById("rulerV");
  let h = "", v = "";
  for (let n = 0; n < 22; n++) {
    const cx = n * paso - 1.5, cy = n * paso;
    if (n) {
      h += `<span class="absolute top-[-2px] leading-[15px] -translate-x-1/2" style="left:${cx}px">${n}</span>`;
      v += `<span class="absolute left-[6px] -translate-x-1/2 -translate-y-1/2" style="top:${cy}px">${n}</span>`;
    }
    [[.25, "w-[1px] h-[1px] top-[5px]"], [.5, "w-[1px] h-[5px] top-[3px]"], [.75, "w-[1px] h-[1px] top-[5px]"]].forEach(([f, c]) => {
      h += `<i class="absolute bg-[#222] ${c}" style="left:${Math.round(cx + f * paso)}px"></i>`;
    });
    [[.25, "w-[2px] left-[5px]"], [.5, "w-[5px] left-[4px]"], [.75, "w-[2px] left-[5px]"]].forEach(([f, c]) => {
      v += `<i class="absolute bg-[#222] h-[1px] ${c}" style="top:${Math.round(cy + f * paso)}px"></i>`;
    });
  }
  rh.innerHTML = h;
  rv.innerHTML = v;

  // rejilla del lienzo
  let lineas = "", puntos = "";
  for (let i = 1; i <= 20; i++) lineas += `M${Math.round(i * paso)} 0V560`;
  for (let j = 1; j <= 14; j++) lineas += `M0 ${Math.round(j * paso)}H756`;
  for (let i = 1; i < 80; i++) for (let j = 1; j < 58; j++) {
    if (i % 4 && j % 4) puntos += `M${Math.round(i * paso / 4)} ${Math.round(j * paso / 4)}h1v1h-1z`;
  }
  document.getElementById("grid").innerHTML = `<path d="${lineas}" stroke="#808080" fill="none"/><path d="${puntos}" fill="#4a4a4a"/>`;

  // controles del impreso: [tipo, x0, y0, x1, y1, texto] en coordenadas de la ventana
  const fila = (y0, y1, items) => items.map(([t, a, b, s]) => [t, a, y0, b, y1, s]);
  const controles = [
    ...fila(370, 390, [["l",212,272,"Nombre"],["l",456,510,"Apellidos"],["s",273,444,"Nombre_Alumno"],["f",514,895,"Apellidos_Alumno"]]),
    ...fila(401, 421, [["l",212,272,"Dirección"],["f",272,767,"Domicilio_Alumno"],["l",782,810,"C.P."],["f",810,895,"CP_Alumno"]]),
    ...fila(433, 453, [["l",212,272,"Población"],["f",272,441,"Poblacion_Alumno"],["l",449,502,"Provincia"],["f",503,672,"Provincia_Alumno"],["l",679,724,"Sector"],["f",725,895,"Sector_Alumno"]]),
    ...fila(463, 483, [["l",212,272,"Teléfono1"],["f",272,371,"Tfno_Alumno"],["l",384,446,"Teléfono2"],["f",445,544,"Tfno_Alumno_2"],["l",551,578,"Mov"],["f",577,677,"Tfno_Movil_Alu"],["l",683,724,"e-mail"],["f",727,895,"Mail_Alumno"]]),
    ...fila(495, 515, [["l",212,272,"N.I.F."],["f",272,388,"Nif_Alumno"],["f",464,553,"Fecha_Nacimie"],["l",563,614,"Estudios:"],["f",616,745,"Nivel_Estudios_Alumn"],["l",760,792,"Sexo"]]),
    ["l",397,488,466,522,"Fecha de<br>nacimiento"],
    ["c",797,487,816,505,""],["c",797,507,816,526,"X"],
    ["l",817,487,888,505,"Masculino"],["l",817,509,888,527,"Femenino"],
    ...fila(573, 592, [["l",212,272,"Nombre"],["f",272,444,"Nombre_Cliente"],["l",456,510,"Apellidos"],["f",514,895,"Apellidos_Cliente"]]),
    ...fila(603, 622, [["l",212,272,"Dirección"],["f",272,767,"Domicilio_Cliente"],["l",783,808,"C.P."],["f",810,895,"CP_Cliente"]]),
    ...fila(635, 654, [["l",212,272,"Población"],["f",272,475,"Poblacion_Cliente"],["l",484,540,"Provincia"],["f",542,745,"Provincia_Cliente"],["l",759,789,"N.I.F."],["f",789,895,"Nif_Cliente"]]),
    ...fila(665, 685, [["l",212,272,"Teléfono1"],["f",272,371,"Tfno_Cliente"],["l",383,446,"T. Móvil"],["f",446,546,"Tfno_Movil_Clie"],["l",551,578,"Fax"],["f",578,677,"Fax_Cliente"],["l",691,728,"e-mail"],["f",728,896,"Mail_Cliente"]]),
    ...fila(697, 717, [["l",212,271,"Profesión"],["f",271,456,"Profesion_Cliente"],["l",464,496,"URL"],["f",499,744,"URL_Cliente"],["l",754,785,"Tipo"]]),
    ["c",795,689,814,707,"X"],["c",795,709,814,728,""],
    ["l",817,689,888,708,"Particular"],["l",817,709,888,728,""],
  ];
  const estilos = {
    l: "border border-[#c9c9c9] pl-[2px]",
    f: "border border-[#1c1c1c] shadow-[inset_1px_0_0_#8a8a8a,inset_-1px_0_0_#8a8a8a,inset_0_-1px_0_#8a8a8a] pl-[4px]",
    s: "border border-[#1c1c1c] pl-[4px]",
    c: "border border-[#1c1c1c] shadow-[inset_1px_0_0_#8a8a8a] pl-[2px]",
  };
  const pos = (x0, y0, x1, y1) => `left:${x0 - 161}px;top:${y0 - 188}px;width:${x1 - x0}px;height:${y1 - y0}px`;
  const lienzo = document.getElementById("canvas");
  let html = "";
  controles.forEach(([t, x0, y0, x1, y1, s]) => {
    html += `<div class="absolute flex items-center whitespace-nowrap overflow-hidden leading-[16px] ${estilos[t]}" style="${pos(x0, y0, x1, y1)}"><span>${s}</span></div>`;
  });
  // tiradores de seleccion
  [[273,371],[358,371],[443,371],[273,380],[443,380],[273,390],[358,390],[443,390]].forEach(([x, y]) => {
    html += `<div class="absolute bg-[#c5c9d6] border border-[#222]" style="${pos(x - 4, y - 4, x + 4, y + 4)}"></div>`;
  });
  lienzo.insertAdjacentHTML("beforeend", html +
    `<div class="absolute border border-[#c9c9c9] flex items-center justify-center" style="${pos(378, 270, 729, 301)}"><span class="font-bold text-[21.3px] text-black underline underline-offset-[2px]">IMPRESO DE MATRÍCULA (1)</span></div>
     <div class="absolute bg-[repeating-linear-gradient(to_bottom,#000_0,#000_2px,#fff_2px,#fff_3px)]" style="${pos(170, 333, 195, 371)}"></div>
     <div class="absolute border border-[#111]" style="${pos(204, 333, 903, 529)}">
       <div class="h-[24px] bg-[#dcdcdc] border-b border-[#111] pt-[1px] px-[6px]"><div class="h-[20px] border border-[#c4c4c4] flex items-center justify-center font-bold text-[14px] text-[#111]">DATOS DEL ALUMNO</div></div>
     </div>
     <div class="absolute border border-[#111]" style="${pos(204, 535, 903, 800)}">
       <div class="h-[24px] bg-[#dcdcdc] border-b border-[#111] pt-[1px] px-[6px]"><div class="relative h-[20px] border border-[#c4c4c4] flex items-center justify-center font-bold text-[14px] text-[#111]">DATOS DEL CLIENTE<span class="absolute left-0 top-[1px] w-[266px] h-[16px] border border-[#c4c4c4]"></span></div></div>
     </div>`);
</script>
</body>
</html>
